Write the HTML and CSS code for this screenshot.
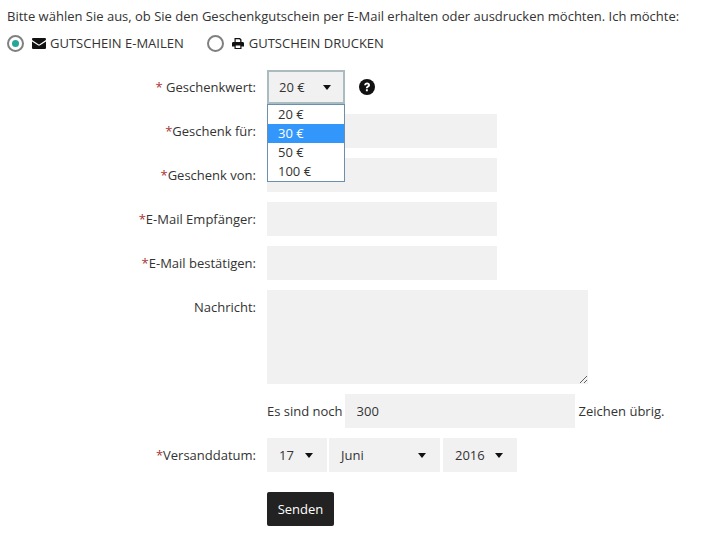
FILE: index.html
```html
<!DOCTYPE html>
<html lang="de">
<head>
<meta charset="utf-8">
<title>Geschenkgutschein</title>
<link rel="stylesheet" href="styles.css">
</head>
<body>
<p class="intro">Bitte wählen Sie aus, ob Sie den Geschenkgutschein per E-Mail erhalten oder ausdrucken möchten. Ich möchte:</p>
<div class="choices">
  <label class="choice"><span class="radio on"></span>
    <svg class="ico" width="14" height="11" viewBox="0 0 14 11"><path d="M1.300 0h11.400c.7 0 1.300.6 1.300 1.200 0 .6-.4 1.100-.8 1.400L7.600 6.300c-.4.3-.8.3-1.200 0L.8 2.600C.4 2.300 0 1.800 0 1.200 0 .6.6 0 1.300 0zM0 3.400l5.900 3.900c.7.500 1.500.5 2.200 0L14 3.400v6.300c0 .7-.6 1.300-1.300 1.300H1.300C.6 11 0 10.400 0 9.700z"/></svg>
    GUTSCHEIN E-MAILEN</label>
  <label class="choice second"><span class="radio"></span>
    <svg class="ico print" width="12" height="11" viewBox="0 0 12 11"><path d="M2.500 0H8l1.500 1.500V4H8.200V2.200L7.400 1.200H3.700V4H2.500zM1.300 4h9.400c.7 0 1.300.6 1.300 1.300V8.500H9.500V11h-7V8.500H0V5.300C0 4.600.6 4 1.300 4zM3.700 7.500v2.400h4.600V7.500z"/></svg>
    GUTSCHEIN DRUCKEN</label>
</div>
<form class="form">
  <div class="row">
    <div class="label"><span class="req">* </span>Geschenkwert:</div>
    <div class="select value focus"><span>20 €</span><i class="caret"></i></div>
    <svg class="help" width="16" height="16" viewBox="0 0 16 16"><circle cx="8" cy="8" r="8"/><path d="M5.200 6.200C5.300 4.600 6.500 3.600 8.100 3.600c1.700 0 2.900 1 2.900 2.400 0 1.200-.7 1.800-1.500 2.300-.5.300-.7.500-.7 1H6.900c0-1.100.4-1.700 1.200-2.200.6-.4.900-.6.900-1 0-.4-.4-.8-.9-.8-.6 0-1 .4-1.100 1zM6.900 10.300h1.900v1.900H6.900z"/></svg>
    <div class="dropdown">
      <div class="opt">20 €</div>
      <div class="opt sel">30 €</div>
      <div class="opt">50 €</div>
      <div class="opt">100 €</div>
    </div>
  </div>
  <div class="row"><div class="label"><span class="req">*</span>Geschenk für:</div><input class="input" type="text"></div>
  <div class="row"><div class="label"><span class="req">*</span>Geschenk von:</div><input class="input" type="text"></div>
  <div class="row"><div class="label"><span class="req">*</span>E-Mail Empfänger:</div><input class="input" type="text"></div>
  <div class="row"><div class="label"><span class="req">*</span>E-Mail bestätigen:</div><input class="input" type="text"></div>
  <div class="row top"><div class="label msg">Nachricht:</div><textarea class="area"></textarea></div>
  <div class="row"><div class="label"></div><span class="before">Es sind noch</span><input class="input" type="text" value="300"><span class="after">Zeichen übrig.</span></div>
  <div class="row dates">
    <div class="label"><span class="req">*</span>Versanddatum:</div>
    <div class="select day"><span>17</span><i class="caret"></i></div>
    <div class="select month"><span>Juni</span><i class="caret"></i></div>
    <div class="select year"><span>2016</span><i class="caret"></i></div>
  </div>
  <div class="row"><div class="label"></div><button class="btn" type="button">Senden</button></div>
</form>
</body>
</html>
```
FILE: styles.css
```css
* { box-sizing: border-box; }
html, body { margin: 0; padding: 0; }
body {
  background: #fff;
  color: #333;
  font-family: "Open Sans", sans-serif;
  font-size: 13px;
  line-height: 18px;
  height: 534px;
  overflow: hidden;
}
.intro { margin: 0; padding: 7px 0 0 7px; white-space: nowrap; }
.choices { display: flex; padding: 9px 0 0 7px; height: 45px; }
.choice { display: flex; align-items: center; height: 18px; }
.second { margin-left: 23px; }
.radio {
  width: 17px; height: 17px;
  border: 2px solid #808080;
  border-radius: 50%;
  margin-right: 8px;
  background: #fff;
  display: flex; align-items: center; justify-content: center;
}
.radio.on::after {
  content: "";
  width: 7px; height: 7px;
  border-radius: 50%;
  background: #26a69a;
}
.ico { fill: #111; margin-right: 4px; }
.print { margin-right: 5px; }
.row { display: flex; align-items: center; height: 34px; margin-bottom: 10px; position: relative; }
.row.top { align-items: flex-start; height: 94px; }
.label { width: 256px; margin-right: 11px; text-align: right; flex: none; }
.msg { padding-top: 8px; }
.req { color: #a33; }
.input {
  display: block; width: 230px; height: 34px;
  border: 0; margin: 0; padding: 0 12px;
  background: #f1f1f1; color: #333;
  font: inherit; outline: 0;
}
.area {
  display: block; width: 321px; height: 94px;
  border: 0; margin: 0; padding: 6px 12px;
  background: #f1f1f1; font: inherit; outline: 0;
}
.before { margin-right: 2px; }
.after { margin-left: 4px; }
.select {
  height: 34px; background: #f1f1f1; color: #333;
  display: flex; align-items: center; justify-content: space-between;
  padding: 0 14px 0 12px;
}
.value { width: 78px; }
.focus { border: 2px solid #a9bcc0; padding: 0 12px 0 10px; }
.day { width: 60px; }
.month { width: 111px; margin-left: 2px; }
.year { width: 74px; margin-left: 3px; }
.caret {
  width: 0; height: 0;
  border-left: 4.500px solid transparent;
  border-right: 4.500px solid transparent;
  border-top: 5px solid #111;
}
.help { fill: #111; margin-left: 14px; }
.help path { fill: #fff; }
.dropdown {
  position: absolute; left: 267px; top: 34px;
  width: 78px; height: 78px;
  background: #fff;
  border: 1px solid #6d8fae;
  z-index: 2;
}
.opt { height: 19px; line-height: 19px; padding-left: 10px; }
.opt.sel { background: #3296fa; color: #fff; }
.dates { margin-bottom: 20px; }
.btn {
  width: 67px; height: 34px;
  background: #222; color: #fff;
  border: 0; border-radius: 2px;
  font: inherit; padding: 0;
}
```
